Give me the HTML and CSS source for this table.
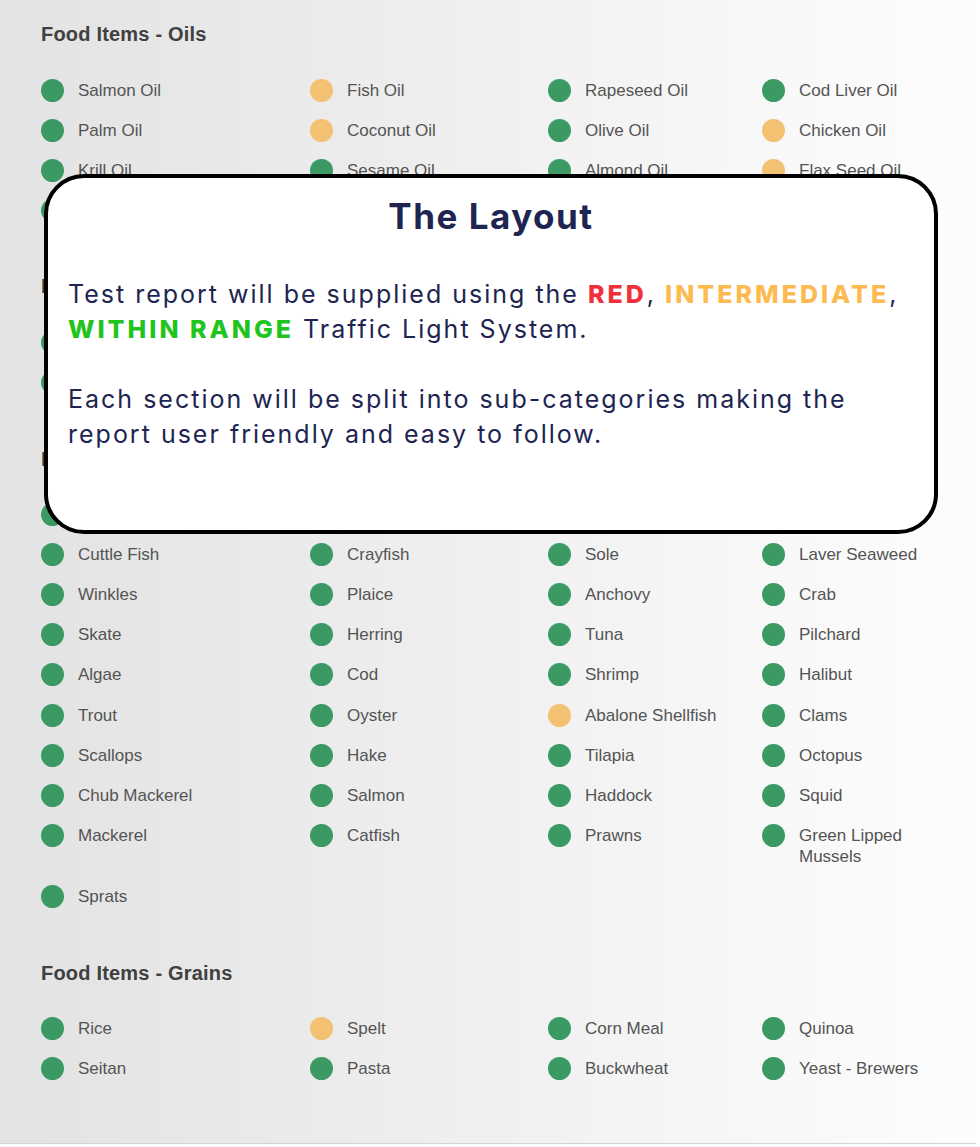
FILE: index.html
```html
<!DOCTYPE html>
<html lang="en">
<head>
<meta charset="utf-8">
<title>The Layout</title>
<link rel="stylesheet" href="styles.css">
</head>
<body>
<div class="page">
  <section class="section">
    <h2 class="section-title">Food Items - Oils</h2>
    <div class="grid">
      <div class="item"><span class="dot green"></span><span class="label">Salmon Oil</span></div>
      <div class="item"><span class="dot amber"></span><span class="label">Fish Oil</span></div>
      <div class="item"><span class="dot green"></span><span class="label">Rapeseed Oil</span></div>
      <div class="item"><span class="dot green"></span><span class="label">Cod Liver Oil</span></div>
      <div class="item"><span class="dot green"></span><span class="label">Palm Oil</span></div>
      <div class="item"><span class="dot amber"></span><span class="label">Coconut Oil</span></div>
      <div class="item"><span class="dot green"></span><span class="label">Olive Oil</span></div>
      <div class="item"><span class="dot amber"></span><span class="label">Chicken Oil</span></div>
      <div class="item"><span class="dot green"></span><span class="label">Krill Oil</span></div>
      <div class="item"><span class="dot green"></span><span class="label">Sesame Oil</span></div>
      <div class="item"><span class="dot green"></span><span class="label">Almond Oil</span></div>
      <div class="item"><span class="dot amber"></span><span class="label">Flax Seed Oil</span></div>
      <div class="item"><span class="dot green"></span><span class="label">Hemp Oil</span></div>
      <div class="item"><span class="dot green"></span><span class="label">Sunflower Oil</span></div>
      <div class="item"><span class="dot green"></span><span class="label">Avocado Oil</span></div>
      <div class="item"><span class="dot amber"></span><span class="label">Walnut Oil</span></div>
    </div>
  </section>

  <section class="section">
    <h2 class="section-title">Food Items - Nuts</h2>
    <div class="grid">
      <div class="item"><span class="dot green"></span><span class="label">Almond</span></div>
      <div class="item"><span class="dot green"></span><span class="label">Cashew</span></div>
      <div class="item"><span class="dot green"></span><span class="label">Hazelnut</span></div>
      <div class="item"><span class="dot amber"></span><span class="label">Peanut</span></div>
      <div class="item"><span class="dot green"></span><span class="label">Walnut</span></div>
      <div class="item"><span class="dot green"></span><span class="label">Pecan</span></div>
      <div class="item"><span class="dot green"></span><span class="label">Brazil Nut</span></div>
      <div class="item"><span class="dot green"></span><span class="label">Pistachio</span></div>
    </div>
  </section>

  <section class="section">
    <h2 class="section-title">Food Items - Fish &amp; Seafood</h2>
    <div class="grid">
      <div class="item"><span class="dot green"></span><span class="label">Sardines</span></div>
      <div class="item"><span class="dot green"></span><span class="label">Lobster</span></div>
      <div class="item"><span class="dot green"></span><span class="label">Sea Bass</span></div>
      <div class="item"><span class="dot green"></span><span class="label">Kelp</span></div>
      <div class="item"><span class="dot green"></span><span class="label">Cuttle Fish</span></div>
      <div class="item"><span class="dot green"></span><span class="label">Crayfish</span></div>
      <div class="item"><span class="dot green"></span><span class="label">Sole</span></div>
      <div class="item"><span class="dot green"></span><span class="label">Laver Seaweed</span></div>
      <div class="item"><span class="dot green"></span><span class="label">Winkles</span></div>
      <div class="item"><span class="dot green"></span><span class="label">Plaice</span></div>
      <div class="item"><span class="dot green"></span><span class="label">Anchovy</span></div>
      <div class="item"><span class="dot green"></span><span class="label">Crab</span></div>
      <div class="item"><span class="dot green"></span><span class="label">Skate</span></div>
      <div class="item"><span class="dot green"></span><span class="label">Herring</span></div>
      <div class="item"><span class="dot green"></span><span class="label">Tuna</span></div>
      <div class="item"><span class="dot green"></span><span class="label">Pilchard</span></div>
      <div class="item"><span class="dot green"></span><span class="label">Algae</span></div>
      <div class="item"><span class="dot green"></span><span class="label">Cod</span></div>
      <div class="item"><span class="dot green"></span><span class="label">Shrimp</span></div>
      <div class="item"><span class="dot green"></span><span class="label">Halibut</span></div>
      <div class="item"><span class="dot green"></span><span class="label">Trout</span></div>
      <div class="item"><span class="dot green"></span><span class="label">Oyster</span></div>
      <div class="item"><span class="dot amber"></span><span class="label">Abalone Shellfish</span></div>
      <div class="item"><span class="dot green"></span><span class="label">Clams</span></div>
      <div class="item"><span class="dot green"></span><span class="label">Scallops</span></div>
      <div class="item"><span class="dot green"></span><span class="label">Hake</span></div>
      <div class="item"><span class="dot green"></span><span class="label">Tilapia</span></div>
      <div class="item"><span class="dot green"></span><span class="label">Octopus</span></div>
      <div class="item"><span class="dot green"></span><span class="label">Chub Mackerel</span></div>
      <div class="item"><span class="dot green"></span><span class="label">Salmon</span></div>
      <div class="item"><span class="dot green"></span><span class="label">Haddock</span></div>
      <div class="item"><span class="dot green"></span><span class="label">Squid</span></div>
      <div class="item"><span class="dot green"></span><span class="label">Mackerel</span></div>
      <div class="item"><span class="dot green"></span><span class="label">Catfish</span></div>
      <div class="item"><span class="dot green"></span><span class="label">Prawns</span></div>
      <div class="item"><span class="dot green"></span><span class="label">Green Lipped Mussels</span></div>
      <div class="item"><span class="dot green"></span><span class="label">Sprats</span></div>
    </div>
  </section>

  <section class="section">
    <h2 class="section-title">Food Items - Grains</h2>
    <div class="grid">
      <div class="item"><span class="dot green"></span><span class="label">Rice</span></div>
      <div class="item"><span class="dot amber"></span><span class="label">Spelt</span></div>
      <div class="item"><span class="dot green"></span><span class="label">Corn Meal</span></div>
      <div class="item"><span class="dot green"></span><span class="label">Quinoa</span></div>
      <div class="item"><span class="dot green"></span><span class="label">Seitan</span></div>
      <div class="item"><span class="dot green"></span><span class="label">Pasta</span></div>
      <div class="item"><span class="dot green"></span><span class="label">Buckwheat</span></div>
      <div class="item"><span class="dot green"></span><span class="label">Yeast - Brewers</span></div>
    </div>
  </section>

  <div class="callout">
    <h1 class="callout-title">The Layout</h1>
    <p class="callout-text">Test report will be supplied using the <strong class="c-red">RED</strong>, <strong class="c-amber">INTERMEDIATE</strong>, <strong class="c-green">WITHIN RANGE</strong> Traffic Light System.</p>
    <p class="callout-text">Each section will be split into sub-categories making the report user friendly and easy to follow.</p>
  </div>
</div>
</body>
</html>
```

FILE: styles.css
```css
html, body {
  margin: 0;
  padding: 0;
}

body {
  background: #fdfdfd;
  font-family: "Liberation Sans", Arial, sans-serif;
}

.page {
  position: relative;
  width: 976px;
  height: 1144px;
  box-sizing: border-box;
  padding: 22px 0 0 41px;
  background: linear-gradient(to right, #e3e3e3 0%, #e9e9e9 25%, #f0f0f0 50%, #f7f7f7 75%, #fdfdfd 100%);
  border-bottom: 1px solid #d4d4d4;
}

.section {
  margin-bottom: 44px;
}

.section-title {
  margin: 0 0 24px 0;
  font-size: 20px;
  line-height: 24px;
  font-weight: bold;
  letter-spacing: 0.2px;
  color: #404040;
}

.grid {
  display: grid;
  grid-template-columns: 269px 238px 214px 180px;
}

.item {
  display: flex;
  align-items: flex-start;
  gap: 14px;
  padding: 9.55px 0;
}

.dot {
  flex: 0 0 23px;
  width: 23px;
  height: 23px;
  margin: -1px 0;
  border-radius: 50%;
}

.dot.green {
  background: #3b9a63;
}

.dot.amber {
  background: #f2c172;
}

.label {
  font-size: 17px;
  line-height: 21px;
  color: #545454;
}

.callout {
  position: absolute;
  left: 44px;
  top: 174px;
  width: 894px;
  height: 360px;
  box-sizing: border-box;
  border: 4px solid #000;
  border-radius: 40px;
  background: #fff;
  padding: 17px 20px 0 20px;
  font-family: Inter, "Noto Sans", sans-serif;
  color: #1e2551;
}

.callout-title {
  margin: 0 0 40px 0;
  text-align: center;
  font-size: 35px;
  line-height: 42px;
  font-weight: 700;
  letter-spacing: 1.5px;
}

.callout-text {
  margin: 0 0 35px 0;
  font-size: 25px;
  line-height: 35px;
  letter-spacing: 2px;
}

.callout-text strong {
  font-weight: 800;
  letter-spacing: 3px;
}

.c-red {
  color: #f2303b;
}

.c-amber {
  color: #fdba50;
}

.c-green {
  color: #1fc41c;
}
```
